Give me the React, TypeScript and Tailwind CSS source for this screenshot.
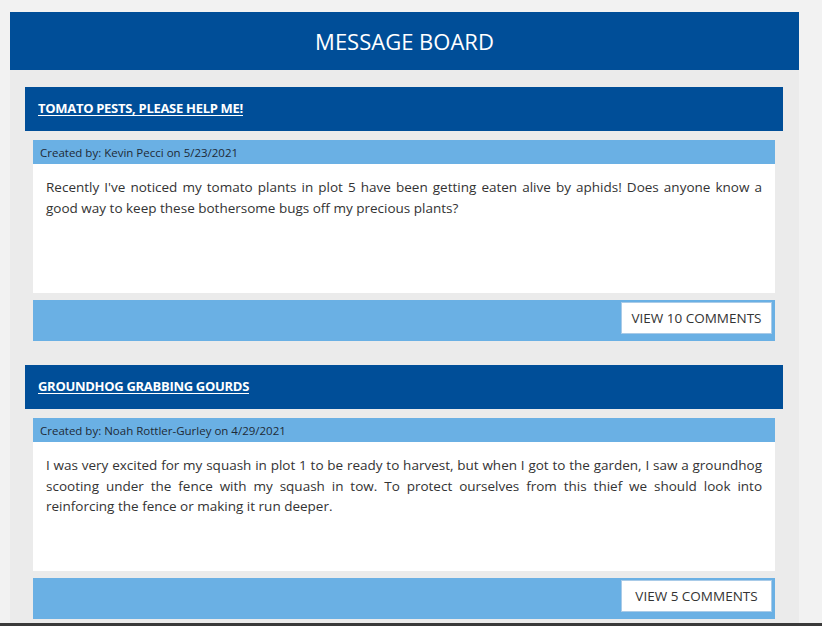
import React from 'react';

const posts = [
  {
    title: 'Tomato pests, please help me!',
    author: 'Kevin Pecci',
    date: '5/23/2021',
    body: "Recently I've noticed my tomato plants in plot 5 have been getting eaten alive by aphids! Does anyone know a good way to keep these bothersome bugs off my precious plants?",
    comments: 10,
  },
  {
    title: 'Groundhog grabbing gourds',
    author: 'Noah Rottler-Gurley',
    date: '4/29/2021',
    body: 'I was very excited for my squash in plot 1 to be ready to harvest, but when I got to the garden, I saw a groundhog scooting under the fence with my squash in tow. To protect ourselves from this thief we should look into reinforcing the fence or making it run deeper.',
    comments: 5,
  },
];

const Post = ({ post }) => {
  return (
    <div className="mt-[17px] mb-[24px]">
      <div className="h-[44px] bg-[#004e98] flex items-center px-[13px]">
        <a href="#" className="text-white text-[13px] tracking-[-0.3px] font-bold uppercase underline underline-offset-2 font-['Open_Sans',sans-serif]">
          {post.title}
        </a>
      </div>
      <div className="mx-[8px] mt-[9px]">
        <div className="h-[24px] bg-[#6ab0e4] flex items-center px-[7px] pt-[2px] text-[11.5px] text-[#1e2a36] font-['Open_Sans',sans-serif]">
          Created by: {post.author} on {post.date}
        </div>
        <div className="h-[129px] bg-white px-[13px] pt-[13px] text-[13.5px] leading-[20.5px] text-[#333] text-justify font-['Open_Sans',sans-serif]">
          {post.body}
        </div>
        <div className="mt-[7px] h-[41px] bg-[#6ab0e4] flex justify-end items-start pt-[2px] pr-[3px]">
          <button className="h-[32px] w-[151px] bg-white border border-[#a9cbe8] text-[13.5px] text-[#333] uppercase font-['Open_Sans',sans-serif]">
            View {post.comments} Comments
          </button>
        </div>
      </div>
    </div>
  );
};

export default function App() {
  return (
    <div className="h-screen overflow-hidden bg-[#f2f2f2] pt-[12px] pl-[10px]">
      <div className="w-[789px] h-full bg-[#ebebeb]">
        <header className="h-[58px] bg-[#004e98] flex items-center justify-center">
          <h1 className="text-white text-[22px] uppercase font-['Open_Sans',sans-serif]">Message Board</h1>
        </header>
        <div className="pl-[15px] pr-[16px]">
          {posts.map((p) => (
            <Post key={p.title} post={p} />
          ))}
        </div>
      </div>
      <div className="fixed bottom-0 inset-x-0 h-[3px] bg-[#3a3a3a]" />
    </div>
  );
}
